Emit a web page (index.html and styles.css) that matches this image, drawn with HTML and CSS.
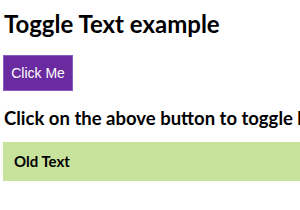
FILE: index.html
```html
<!DOCTYPE html>
<html lang="en">
<head>
  <meta charset="UTF-8">
  <meta name="viewport" content="width=device-width, initial-scale=1.0">
  <title>Toggle Text</title>
  <link rel="stylesheet" href="styles.css">
</head>
<body>
  <!-- Toggle demo -->
  <div class="page">
    <h1 class="title">Toggle Text example</h1>
    <button id="toggle-button" class="toggle-button">Click Me</button>
    <p class="hint">Click on the above button to toggle between texts</p>
    <div id="text-box" class="text-box">Old Text</div>
  </div>

  <script>
    // Swap the text on click
    document.getElementById('toggle-button').addEventListener('click', function () {
      const box = document.getElementById('text-box');
      box.textContent = box.textContent === 'Old Text' ? 'New Text' : 'Old Text';
    });
  </script>
</body>
</html>
```

FILE: styles.css
```css
/* Base Styling */
* {
  margin: 0;
  padding: 0;
  box-sizing: border-box;
}

body {
  font-family: Lato, "Noto Sans", sans-serif;
  background-color: #fff;
  color: #000;
  overflow: hidden;
}

.page {
  padding: 9px 0 0 3px;
  white-space: nowrap;
}

/* Heading */
.title {
  font-size: 24px;
  font-weight: bold;
  line-height: 30px;
  margin-bottom: 16px;
  padding-left: 1px;
}

/* Button */
.toggle-button {
  display: block;
  width: 70px;
  height: 36px;
  background-color: #6a2aa0;
  border: 1px solid #8a5cc4;
  color: #fff;
  font-family: "Liberation Sans", Arial, sans-serif;
  font-size: 14px;
  cursor: pointer;
}

/* Hint text */
.hint {
  font-size: 18.5px;
  font-weight: bold;
  line-height: 24px;
  margin-top: 15px;
  padding-left: 1px;
}

/* Text Box */
.text-box {
  margin-top: 12px;
  background-color: #c8e39b;
  height: 39px;
  line-height: 39px;
  padding-left: 11px;
  font-size: 15px;
  font-weight: bold;
}
```
